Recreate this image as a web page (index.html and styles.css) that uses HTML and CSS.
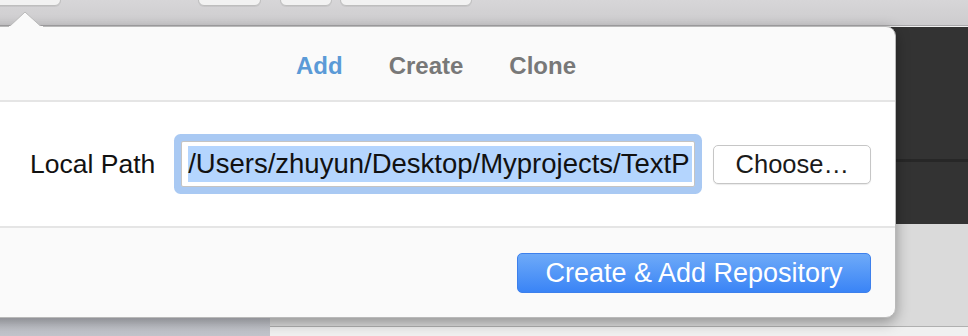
FILE: index.html
```html
<html lang="en">
<head>
  <meta charset="UTF-8">
  <meta name="viewport" content="width=device-width, initial-scale=1.0">
  <title>Add Repository</title>
  <link rel="stylesheet" href="styles.css">
</head>
<body>
  <div class="toolbar">
    <div class="tool-btn tool-first"></div>
    <div class="tool-btn tool-second"></div>
    <div class="tool-btn tool-third"></div>
    <div class="tool-btn tool-fourth"></div>
  </div>

  <div class="workspace">
    <div class="sidebar"></div>
    <div class="main">
      <div class="dark-panel">
        <div class="dark-top"></div>
        <div class="dark-bottom"></div>
      </div>
      <div class="light-panel"></div>
      <div class="status-panel"></div>
    </div>
  </div>

  <svg class="popover-arrow" width="34" height="16" viewBox="0 0 34 16">
    <polygon points="0.5,15.5 16,1 32,15.5" fill="#fafafa" stroke="#b9b9b9" stroke-width="1"></polygon>
    <rect x="0" y="15" width="34" height="1" fill="#fafafa"></rect>
  </svg>

  <div class="popover">
    <div class="tabs">
      <span class="tab active">Add</span>
      <span class="tab">Create</span>
      <span class="tab">Clone</span>
    </div>
    <div class="path-row">
      <label class="path-label">Local Path</label>
      <div class="path-field">
        <span class="path-selection">/Users/zhuyun/Desktop/Myprojects/TextP</span>
      </div>
      <button class="choose-btn">Choose…</button>
    </div>
    <div class="actions">
      <button class="primary-btn">Create &amp; Add Repository</button>
    </div>
  </div>
</body>
</html>
```

FILE: styles.css
```css
body {
  margin: 0;
  width: 968px;
  height: 336px;
  overflow: hidden;
  font-family: "Liberation Sans", Arial, sans-serif;
  background: #f0f0f0;
}

.toolbar {
  height: 25px;
  display: flex;
  align-items: flex-start;
  background: linear-gradient(#d7d6d8, #cdccce);
  border-bottom: 1px solid #a9a8aa;
}

.tool-btn {
  height: 22px;
  margin-top: -16px;
  background: #f2f2f2;
  border: 1px solid #bebebe;
  border-radius: 6px;
  box-sizing: border-box;
  box-shadow: 0 1px 0 rgba(0, 0, 0, 0.06);
}

.tool-first {
  width: 101px;
  margin-left: -40px;
}

.tool-second {
  width: 63px;
  margin-left: 137px;
}

.tool-third {
  width: 52px;
  margin-left: 19px;
}

.tool-fourth {
  width: 132px;
  margin-left: 8px;
}

.workspace {
  display: flex;
  height: 310px;
}

.sidebar {
  width: 270px;
  background: linear-gradient(#b3b5bd, #c2c4cb);
}

.main {
  flex: 1;
  display: flex;
  flex-direction: column;
  background: #f0f0f0;
}

.dark-panel {
  height: 197px;
  margin-top: 1px;
  display: flex;
  flex-direction: column;
  background: #333333;
}

.dark-top {
  height: 132px;
  border-bottom: 3px solid #272727;
}

.dark-bottom {
  flex: 1;
}

.light-panel {
  height: 102px;
  background: #dadada;
  border-bottom: 1px solid #b0b0b0;
}

.status-panel {
  flex: 1;
  background: #f0f0f0;
}

.popover-arrow {
  position: absolute;
  left: 9px;
  top: 11px;
  z-index: 2;
}

.popover {
  position: absolute;
  left: -24px;
  top: 26px;
  width: 920px;
  height: 292px;
  box-sizing: border-box;
  display: flex;
  flex-direction: column;
  background: #fafafa;
  border: 1px solid #b9b9b9;
  border-radius: 10px;
  overflow: hidden;
  box-shadow: 0 4px 14px rgba(0, 0, 0, 0.35);
}

.tabs {
  height: 75px;
  flex-shrink: 0;
  display: flex;
  justify-content: center;
  align-items: center;
  gap: 46px;
  padding-top: 5px;
  box-sizing: border-box;
  border-bottom: 2px solid #e5e5e5;
}

.tab {
  font-size: 24px;
  font-weight: bold;
  color: #787878;
}

.tab.active {
  color: #5b9ad7;
}

.path-row {
  height: 126px;
  flex-shrink: 0;
  box-sizing: border-box;
  display: flex;
  align-items: center;
  padding-left: 53px;
  background: #ffffff;
  border-bottom: 2px solid #e5e5e5;
}

.path-label {
  font-size: 26.5px;
  color: #111111;
  margin-right: 26px;
}

.path-field {
  width: 514px;
  height: 46px;
  box-sizing: border-box;
  padding: 4px 2px 0 6px;
  background: #ffffff;
  border: 1px solid #c4c4c4;
  border-radius: 2px;
  box-shadow: 0 0 0 7px #a9c9f3;
}

.path-selection {
  display: block;
  height: 36px;
  line-height: 36px;
  font-size: 27.5px;
  color: #111111;
  background: #b4d5fe;
  white-space: nowrap;
}

.choose-btn {
  margin-left: 18px;
  width: 158px;
  height: 39px;
  padding: 0;
  font-family: inherit;
  font-size: 25.5px;
  color: #1a1a1a;
  background: #ffffff;
  border: 1px solid #c6c6c6;
  border-radius: 5px;
  box-shadow: 0 1px 1px rgba(0, 0, 0, 0.08);
}

.actions {
  flex: 1;
  display: flex;
  justify-content: flex-end;
  align-items: center;
  padding-right: 24px;
  padding-top: 1px;
}

.primary-btn {
  width: 354px;
  height: 40px;
  padding: 0;
  font-family: inherit;
  font-size: 27px;
  color: #ffffff;
  background: linear-gradient(#6eaaf8, #3a84f6);
  border: 1px solid #3d80ec;
  border-radius: 5px;
}
```
